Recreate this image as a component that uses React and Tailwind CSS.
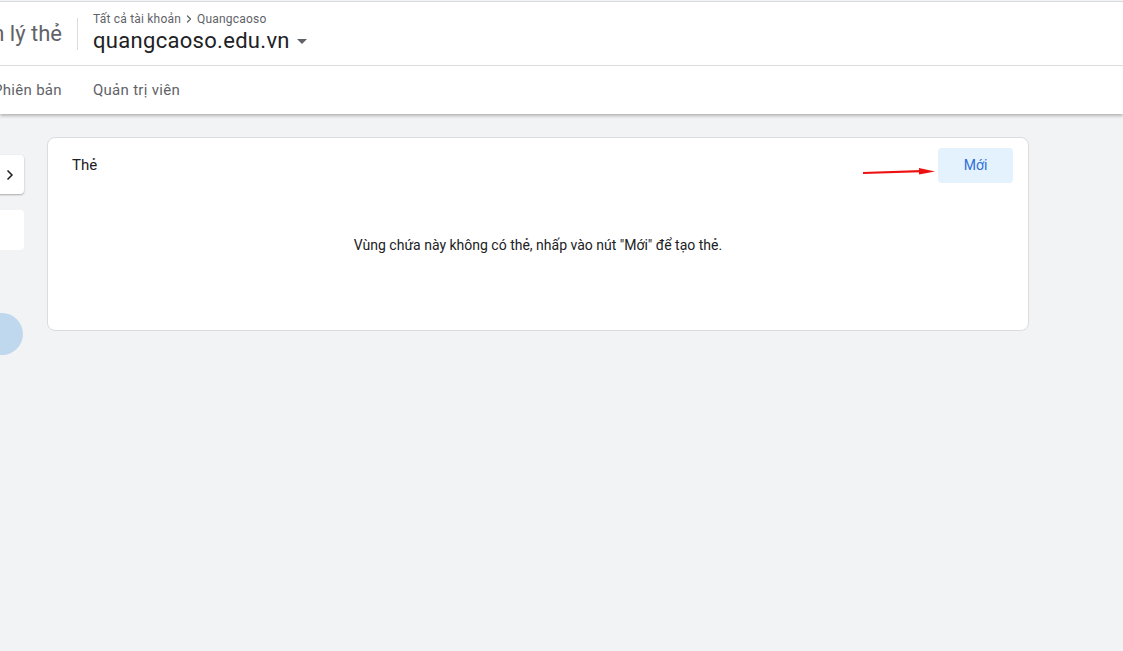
import { ChevronRight } from "lucide-react";

export default function App() {
  return (
    <div className="h-[651px] w-[1123px] overflow-hidden bg-[#f1f3f4] font-['Roboto',sans-serif]">
      <div className="h-px mt-px bg-[#dadce0]" />
      <header className="relative z-10 bg-white shadow-[0_2px_3px_rgba(0,0,0,0.25)]">
        <div className="flex h-[64px] items-center border-b border-[#dadce0]">
          <span className="-ml-[47px] whitespace-nowrap text-[22px] text-[#5f6368]">Quản lý thẻ</span>
          <div className="ml-[15px] h-[32px] w-px bg-[#dadce0]" />
          <div className="ml-[15px] flex flex-col">
            <div className="flex items-center text-[12px] leading-[14px] tracking-[0.2px] text-[#5f6368]">
              Tất cả tài khoản
              <ChevronRight size={12} strokeWidth={2.5} className="mx-[2px]" />
              Quangcaoso
            </div>
            <div className="flex items-center text-[22px] leading-[30px] tracking-[0.3px] text-[#202124]">
              quangcaoso.edu.vn
              <svg width="10" height="5" viewBox="0 0 10 5" className="ml-[7px] mt-[2px]">
                <path d="M0 0 L10 0 L5 5 Z" fill="#5f6368" />
              </svg>
            </div>
          </div>
        </div>
        <nav className="flex h-[48px] items-center text-[15px] tracking-[0.3px] text-[#5f6368]">
          <span className="-ml-[7px]">Phiên bản</span>
          <span className="ml-[31px]">Quản trị viên</span>
        </nav>
      </header>

      <div className="flex pt-[23px]">
        <aside className="flex w-[47px] shrink-0 flex-col pt-[18px]">
          <div className="-ml-[20px] flex h-[39px] w-[44px] items-center justify-end rounded-[4px] bg-white pr-[6px] shadow-[0_1px_2px_rgba(0,0,0,0.3)]">
            <ChevronRight size={16} strokeWidth={2.5} className="text-[#202124]" />
          </div>
          <div className="-ml-[20px] mt-[16px] h-[40px] w-[44px] rounded-[4px] bg-white" />
          <div className="-ml-[19px] mt-[63px] h-[42px] w-[42px] rounded-full bg-[#c0d8ee]" />
        </aside>

        <main className="w-[982px]">
          <section className="relative h-[194px] rounded-[8px] border border-[#dadce0] bg-white">
            <div className="flex items-start justify-between pl-[24px] pr-[15px] pt-[10px]">
              <h2 className="pt-[6px] text-[15px] text-[#202124]">Thẻ</h2>
              <button className="h-[35px] w-[75px] rounded-[4px] bg-[#e3f2fd] text-[14px] text-[#2f6fd6]">
                Mới
              </button>
            </div>
            <p className="mt-[52px] text-center text-[14px] text-[#202124]">
              Vùng chứa này không có thẻ, nhấp vào nút "Mới" để tạo thẻ.
            </p>
            <svg width="74" height="8" viewBox="0 0 74 8" className="absolute left-[815px] top-[30px]">
              <path d="M0 5 L58 3.2" stroke="#ee1111" strokeWidth="2.2" />
              <path d="M56 0 L72 3.6 L56 6.5 Z" fill="#ee1111" />
            </svg>
          </section>
        </main>
      </div>
    </div>
  );
}
